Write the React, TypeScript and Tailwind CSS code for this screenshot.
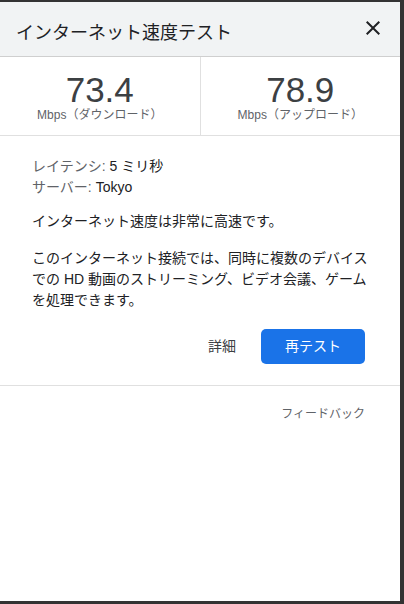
import React from 'react';

const font = '"Liberation Sans", "Noto Sans CJK JP", sans-serif';

interface StatProps {
  value: string;
  label: string;
  divider?: boolean;
}

const Stat: React.FC<StatProps> = ({ value, label, divider }) => {
  return (
    <div
      className={
        divider
          ? 'flex-1 flex flex-col items-center pt-[18px] border-r border-[#e0e0e0]'
          : 'flex-1 flex flex-col items-center pt-[18px]'
      }
    >
      <div className="text-[35px] leading-[30px] text-[#3c4043]">{value}</div>
      <div className="mt-[2px] text-[12px] leading-[16px] text-[#5f6368]">{label}</div>
    </div>
  );
};

export default function App() {
  return (
    <div className="w-[404px] h-[604px] bg-[#333333] pt-[2px] pr-[4px] pb-[3px]" style={{ fontFamily: font }}>
      <div className="w-[400px] h-[599px] bg-white flex flex-col">
        {/* header */}
        <div className="h-[55px] bg-[#f1f3f4] border-b border-[#cfcfcf] flex items-start justify-between pl-4 pr-[15px]">
          <div className="mt-[19px] text-[18px] leading-[24px] text-[#202124]">インターネット速度テスト</div>
          <button className="mt-[14px] text-[#202124]" aria-label="閉じる">
            <svg width="24" height="24" viewBox="0 0 24 24" fill="currentColor">
              <path d="M19 6.41L17.59 5 12 10.59 6.41 5 5 6.41 10.59 12 5 17.59 6.41 19 12 13.41 17.59 19 19 17.59 13.41 12z" />
            </svg>
          </button>
        </div>

        {/* speeds */}
        <div className="h-[79px] flex border-b border-[#e0e0e0]">
          <Stat value="73.4" label="Mbps（ダウンロード）" divider />
          <Stat value="78.9" label="Mbps（アップロード）" />
        </div>

        {/* details */}
        <div className="pt-[20px] pb-[21px] pl-8 pr-7 border-b border-[#e0e0e0] text-[14px] leading-[21px]">
          <div>
            <div>
              <span className="text-[#5f6368]">レイテンシ: </span>
              <span className="text-[#202124]">5 ミリ秒</span>
            </div>
            <div>
              <span className="text-[#5f6368]">サーバー: </span>
              <span className="text-[#202124]">Tokyo</span>
            </div>
          </div>
          <p className="mt-[13px] text-[#202124]">インターネット速度は非常に高速です。</p>
          <p className="mt-[16px] text-[#202124]">
            このインターネット接続では、同時に複数のデバイスでの HD 動画のストリーミング、ビデオ会議、ゲームを処理できます。
          </p>
          <div className="mt-[18px] pr-[7px] flex items-center justify-end gap-[25px]">
            <button className="text-[14px] text-[#3c4043]">詳細</button>
            <button className="w-[104px] h-[35px] rounded-[5px] bg-[#1a73e8] text-white text-[14px]">再テスト</button>
          </div>
        </div>

        {/* feedback */}
        <div className="pt-[20px] pr-[35px] flex justify-end">
          <button className="text-[12px] leading-[16px] text-[#5f6368]">フィードバック</button>
        </div>
      </div>
    </div>
  );
}
